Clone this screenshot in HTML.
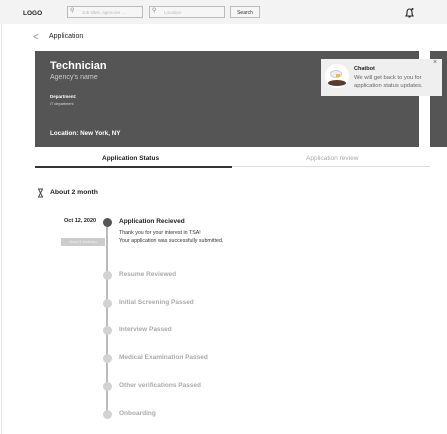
<!DOCTYPE html>
<html><head><meta charset="utf-8"><style>
*{margin:0;padding:0;box-sizing:border-box}
body{width:447px;height:434px;background:#fff;font-family:"Liberation Sans",sans-serif;position:relative;overflow:hidden;color:#222}
.a{position:absolute;white-space:nowrap}
.dot{position:absolute;width:9px;height:9px;border-radius:50%;background:#d2d2d2;left:103px}
.st{position:absolute;left:119px;font-size:6.5px;font-weight:bold;color:#aaa}
</style></head><body>
<div class="a" style="left:0;top:0;width:447px;height:24px;background:#f3f3f3"></div>
<div class="a" style="left:1px;top:24px;width:1px;height:410px;background:#e6e6e6"></div>
<div class="a" style="left:23px;top:10px;font-size:6.5px;font-weight:bold">LOGO</div>
<div class="a" style="left:67px;top:6px;width:76px;height:12px;border:1px solid #bbb;background:#f6f6f6;font-size:4.5px;color:#bbb;padding:3px 0 0 14px">Job titles, agencies ...</div>
<div class="a" style="left:70px;top:7px;font-size:6px;color:#888">&#9906;</div>
<div class="a" style="left:149px;top:6px;width:76px;height:12px;border:1px solid #bbb;background:#f6f6f6;font-size:4.5px;color:#bbb;padding:3px 0 0 14px">Location</div>
<div class="a" style="left:152px;top:7px;font-size:6px;color:#888">&#9906;</div>
<div class="a" style="left:230px;top:6px;width:30px;height:12px;border:1px solid #bbb;background:#f6f6f6;font-size:5px;color:#333;text-align:center;padding-top:3px">Search</div>
<svg class="a" style="left:404px;top:7px" width="11" height="12" viewBox="0 0 11 12"><path d="M2 9 L3 7 V5 A2.5 3 0 0 1 8 5 V7 L9 9 Z M4.5 10 H6.5" fill="none" stroke="#222" stroke-width="1.1"/><circle cx="8.5" cy="2" r="1" fill="#222"/></svg>
<div class="a" style="left:33px;top:32px;font-size:10px;color:#888">&lt;</div>
<div class="a" style="left:49px;top:33px;font-size:7px">Application</div>
<div class="a" style="left:35px;top:51px;width:384px;height:96px;background:#555"></div>
<div class="a" style="left:430px;top:51px;width:17px;height:96px;background:#555"></div>
<div class="a" style="left:50px;top:60px;font-size:11px;font-weight:bold;color:#fff">Technician</div>
<div class="a" style="left:50px;top:74px;font-size:7px;color:#ccc">Agency's name</div>
<div class="a" style="left:50px;top:94px;font-size:4.5px;font-weight:bold;color:#fff">Department:</div>
<div class="a" style="left:50px;top:102px;font-size:3.8px;color:#ddd">IT department</div>
<div class="a" style="left:50px;top:130px;font-size:6.3px;font-weight:bold;color:#fff">Location: New York, NY</div>
<div class="a" style="left:321px;top:59px;width:121px;height:37px;background:#efefef"></div>
<div class="a" style="left:325px;top:64px;width:24px;height:24px;border-radius:50%;background:#fff"></div>
<div class="a" style="left:330px;top:70px;width:12px;height:8px;border-radius:50%;background:#eee;border:1px solid #ccc"></div>
<div class="a" style="left:336px;top:74px;width:4px;height:3px;background:#e8c040"></div>
<div class="a" style="left:328px;top:80px;width:18px;height:6px;border-radius:50%;background:#5b3a2a"></div>
<div class="a" style="left:354px;top:66px;font-size:5.5px;font-weight:bold">Chatbot</div>
<div class="a" style="left:354px;top:74px;font-size:5.8px;color:#666;line-height:8px">We will get back to you for<br>application status updates.</div>
<div class="a" style="left:433px;top:59px;font-size:7px;color:#666">×</div>
<div class="a" style="left:102px;top:155px;font-size:6.5px;font-weight:bold">Application Status</div>
<div class="a" style="left:306px;top:155px;font-size:6.5px;color:#aaa">Application review</div>
<div class="a" style="left:35px;top:166px;width:197px;height:2px;background:#333"></div>
<div class="a" style="left:232px;top:166px;width:198px;height:1px;background:#ddd"></div>
<svg class="a" style="left:37px;top:188px" width="7" height="10" viewBox="0 0 7 10"><path d="M1 1 H6 M1 9 H6 M1.5 1 L5.5 9 M5.5 1 L1.5 9" stroke="#444" stroke-width="0.9" fill="none"/></svg>
<div class="a" style="left:50px;top:189px;font-size:6.8px;font-weight:bold">About 2 month</div>
<div class="a" style="left:106px;top:222px;width:2px;height:192px;background:#bbb"></div>
<div class="dot" style="top:218px;background:#555"></div>
<div class="a" style="left:64px;top:218px;font-size:5.5px;font-weight:bold">Oct 12, 2020</div>
<div class="a" style="left:61px;top:238px;width:44px;height:8px;background:#ccc;font-size:3.5px;color:#eee;text-align:center;padding-top:2px">About 5 workdays</div>
<div class="a" style="left:119px;top:218px;font-size:6.5px;font-weight:bold">Application Recieved</div>
<div class="a" style="left:119px;top:230px;font-size:5.3px;color:#333;line-height:7.5px">Thank you for your interest in TSA!<br>Your application was successfully submitted.</div>
<div class="dot" style="top:271px"></div><div class="st" style="top:271px">Resume Reviewed</div>
<div class="dot" style="top:299px"></div><div class="st" style="top:299px">Initial Screening Passed</div>
<div class="dot" style="top:326px"></div><div class="st" style="top:326px">Interview Passed</div>
<div class="dot" style="top:354px"></div><div class="st" style="top:354px">Medical Examination Passed</div>
<div class="dot" style="top:382px"></div><div class="st" style="top:382px">Other verifications Passed</div>
<div class="dot" style="top:410px"></div><div class="st" style="top:410px">Onboarding</div>
</body></html>
